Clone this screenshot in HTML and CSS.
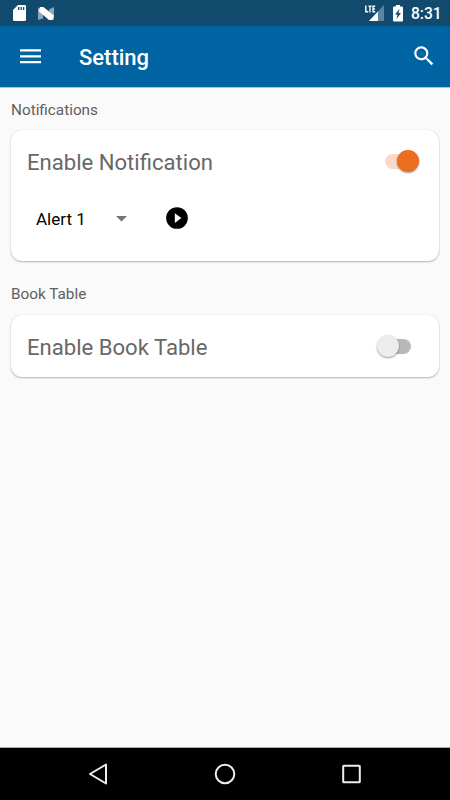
FILE: index.html
```html
<!DOCTYPE html>
<html lang="en">
<head>
<meta charset="utf-8">
<title>Setting</title>
<link rel="stylesheet" href="styles.css">
</head>
<body>
<div class="screen">
  <div class="status">
    <svg class="sd" width="14" height="16" viewBox="0 0 14 16"><path fill="#fff" d="M5 0h6.700q1.300 0 1.300 1.300v13.400q0 1.300-1.300 1.300H1.300Q0 16 0 14.700V5z"/><path fill="#114a6d" d="M5 2h1.300v3H5zM7.500 2h1.300v3H7.500zM10 2h1.300v3H10z"/></svg>
    <svg class="nougat" width="16" height="14" viewBox="0 0 16 14"><path fill="#8aa8b9" d="M0 .5l5 3v8l-5 1.500zM11 2.500L16 0v13l-5-3z"/><path fill="#fff" d="M2 0h3.500L16 8.800 14.500 13H11L.8 4.200z"/></svg>
    <span class="spacer"></span>
    <svg class="signal" width="20" height="17" viewBox="0 0 20 17"><path fill="#5b859e" d="M19 0v16H4z"/><path fill="#fff" d="M13 6.500V16H4z"/><path fill="#114a6d" d="M0 0h11v7.800H0z"/><path fill="none" stroke="#fff" stroke-width="1.400" d="M.8 .5v6.300h2.400M3.500 1.200h3M5 1.200v6.300M10.200 1.200H8v5.600h2.200M8 4h2"/></svg>
    <svg class="battery" width="10" height="17" viewBox="0 0 10 17"><path fill="#fff" d="M3 0h4v1.500h2q1 0 1 1V15.500q0 1-1 1H1q-1 0-1-1v-13q0-1 1-1h2z"/><path fill="#114a6d" d="M6.500 4L5.600 8H8l-4.500 6 .9-4.500H2z"/></svg>
    <span class="clock">8:31</span>
  </div>
  <header class="appbar">
    <svg class="menu" width="21" height="16" viewBox="0 0 21 16"><path fill="none" stroke="#fff" stroke-width="2.200" d="M0 2.300h21M0 8.300h21M0 14.100h21"/></svg>
    <h1 class="title">Setting</h1>
    <svg class="search" width="26" height="26" viewBox="0 0 24 24"><path fill="#fff" d="M15.500 14h-.79l-.28-.27A6.470 6.470 0 0 0 16 9.500 6.500 6.500 0 1 0 9.500 16c1.610 0 3.090-.59 4.230-1.570l.27.28v.79l5 4.990L20.490 19l-4.990-5zm-6 0C7.010 14 5 11.990 5 9.500S7.010 5 9.500 5 14 7.010 14 9.500 11.990 14 9.500 14z"/></svg>
  </header>
  <main class="content">
    <h2 class="label">Notifications</h2>
    <section class="card alerts">
      <div class="row"><span>Enable Notification</span><span class="switch on"><i class="thumb"></i></span></div>
      <div class="picker">
        <span class="value">Alert 1</span>
        <svg class="caret" width="11" height="6" viewBox="0 0 11 6"><path fill="#757575" d="M0 0h11L5.500 5.500z"/></svg>
        <svg class="play" width="26" height="26" viewBox="0 0 24 24"><path d="M12 2a10 10 0 1 0 0 20 10 10 0 0 0 0-20zm-2 14.500v-9l6 4.500z"/></svg>
      </div>
    </section>
    <h2 class="label">Book Table</h2>
    <section class="card">
      <div class="row"><span>Enable Book Table</span><span class="switch"><i class="thumb"></i></span></div>
    </section>
  </main>
  <nav class="navbar">
    <svg width="22" height="22" viewBox="0 0 22 22"><path d="M18 1.500v19L2 11z"/></svg>
    <svg width="22" height="22" viewBox="0 0 22 22"><circle cx="11" cy="11" r="9.300"/></svg>
    <svg width="22" height="22" viewBox="0 0 22 22"><rect x="3.200" y="2.700" width="16.600" height="16.600" rx=".6"/></svg>
  </nav>
</div>
</body>
</html>
```
FILE: styles.css
```css
* { box-sizing: border-box; }
body { margin: 0; font-family: Roboto, "Liberation Sans", sans-serif; }
svg { display: block; flex: none; }
.screen { display: flex; flex-direction: column; height: 800px; background: #fafafa; }
.status { height: 26px; flex: none; display: flex; align-items: flex-start; background: #114a6d; color: #fff; }
.sd { margin: 5px 0 0 13px; }
.nougat { margin: 7px 0 0 11px; }
.spacer { flex: 1; }
.signal { margin-top: 5px; }
.battery { margin: 5px 0 0 8px; }
.clock { width: 47px; padding-left: 8px; font-size: 15.600px; font-weight: 500; line-height: 28px; }
.appbar { height: 62px; flex: none; display: flex; align-items: center; padding: 0 13px 0 20px; background: #0063a2; border-bottom: 1px solid #a9c6da; color: #fff; }
.menu, .search { margin-bottom: 1px; }
.title { flex: 1; margin: 3px 0 0 38px; font-size: 22px; font-weight: 500; line-height: 28px; }
.content { flex: 1; padding: 12px 11px 0; }
.label { margin: 0; height: 20px; font-size: 15.300px; font-weight: 400; line-height: 20px; color: #606060; }
.card { height: 62px; margin: 10px 0 0; padding: 0 16px; border-radius: 11px; background: #fff; box-shadow: 0 1px 2px rgba(0, 0, 0, .28), 0 0 1px rgba(0, 0, 0, .15); }
.alerts { height: 131px; margin-bottom: 23px; }
.card + .label + .card { margin-top: 11px; }
.row { height: 62px; display: flex; align-items: center; justify-content: space-between; font-size: 22.100px; line-height: 26px; color: #686868; }
.row span:first-child { padding-top: 1px; }
.switch { display: flex; width: 34.500px; height: 15px; margin-right: 12px; align-items: center; background: linear-gradient(#b9b9b9, #b9b9b9) 9px 0 / 26px 15px no-repeat; border-radius: 0 8px 8px 0; }
.thumb { width: 22px; height: 22px; flex: none; border-radius: 50%; background: #ececec; box-shadow: 0 1px 2px rgba(0, 0, 0, .4); }
.switch.on { width: 34px; margin-right: 4px; justify-content: flex-end; background: #fbd9c5; border-radius: 8px; }
.switch.on .thumb { background: #ea6e1e; }
.picker { display: flex; align-items: center; height: 52px; padding-left: 9px; }
.value { width: 80px; padding-top: 1px; font-size: 17px; line-height: 24px; color: #000; }
.caret { margin-top: 1px; }
.play { margin-left: 37px; }
.navbar { height: 53px; flex: none; display: flex; align-items: center; justify-content: space-between; padding: 0 88px; background: #000; border-top: 1px solid #aaa; }
.navbar path, .navbar circle, .navbar rect { fill: none; stroke: #eee; stroke-width: 2; stroke-linejoin: round; }
```
